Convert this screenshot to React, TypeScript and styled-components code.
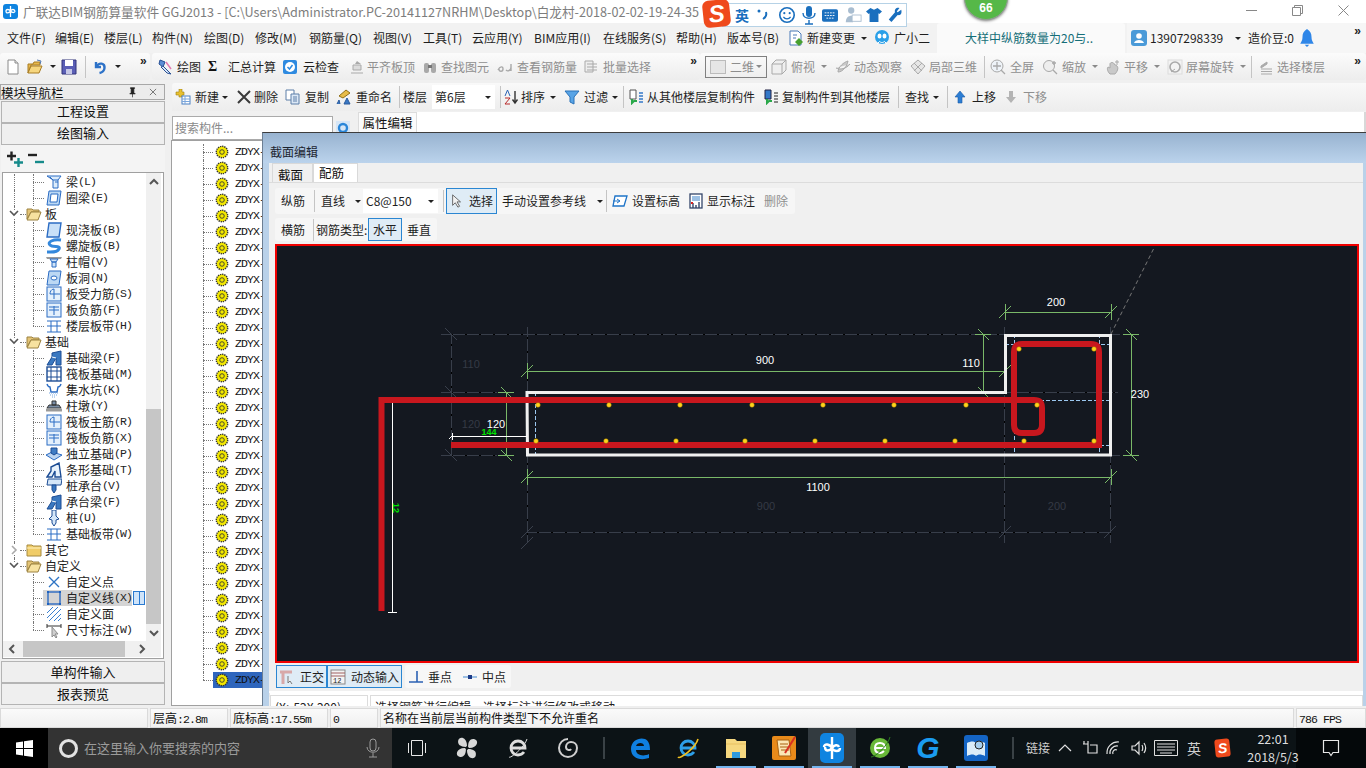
import React from 'react';
import styled, { createGlobalStyle } from 'styled-components';

const CJK = '"Noto Sans CJK SC","Noto Sans",sans-serif';
const MONO = '"Liberation Mono","Noto Sans CJK SC",monospace';

const Global = createGlobalStyle`
  html,body{margin:0;padding:0;overflow:hidden;background:#f0f0f0;}
  *{box-sizing:border-box;}
`;

const Root = styled.div`
  position:relative;width:1366px;height:768px;overflow:hidden;display:flex;flex-direction:column;
  font:12px/16px ${CJK};color:#1e1e1e;background:#f0f0f0;
`;
const TitleBar = styled.div`height:23px;background:#fff;display:flex;align-items:center;padding-left:3px;color:#7d7d7d;flex:none;`;
const TitleText = styled.div`margin-left:5px;font-size:12.65px;white-space:nowrap;width:700px;`;
const WinControls = styled.div`margin-left:auto;display:flex;width:138px;height:23px;`;
const WinBtn = styled.div`width:46px;display:flex;align-items:center;justify-content:center;padding-bottom:3px;`;

const MenuBar = styled.div`height:30px;flex:none;display:flex;background:#f2f2f2;padding-left:7px;align-items:center;`;
const MenuItem = styled.div<{ $w: number }>`width:${p => p.$w}px;flex:none;white-space:nowrap;display:flex;align-items:center;`;
const TipPanel = styled.div`width:188px;height:30px;flex:none;background:#fafafa;border-radius:3px 3px 0 0;color:#156e78;padding-left:28px;line-height:30px;margin-right:2px;`;
const UserPanel = styled.div`flex:1;height:30px;display:flex;align-items:center;background:#f6f6f6;padding-left:4px;position:relative;`;

const ToolRow = styled.div`height:30px;flex:none;display:flex;background:#f0f0f0;`;
const Group = styled.div<{ $w: number; $pad: number; $ml?: number }>`
  width:${p => p.$w}px;padding-left:${p => p.$pad}px;margin-left:${p => p.$ml ?? 0}px;height:27px;flex:none;display:flex;align-items:center;
  background:linear-gradient(#fbfbfb,#ededed);border-radius:3px;position:relative;
`;
const Slot = styled.div<{ $w: number; $dim?: boolean }>`
  width:${p => p.$w}px;flex:none;display:flex;align-items:center;white-space:nowrap;height:22px;
  color:${p => (p.$dim ? '#8f8f8f' : '#1e1e1e')};
`;
const IconBox = styled.span<{ $w: number }>`width:${p => p.$w}px;flex:none;display:flex;align-items:center;`;
const Caret = styled.span<{ $dim?: boolean }>`
  width:0;height:0;border:3px solid transparent;border-top:3px solid ${p => (p.$dim ? '#8a8a8a' : '#222')};border-bottom:0;display:block;flex:none;
`;
const Sep = styled.div<{ $w: number }>`width:${p => p.$w}px;flex:none;height:22px;display:flex;&::before{content:'';width:1px;height:22px;background:#c4c4c4;}`;
const More = styled.span`position:absolute;top:2px;font:bold 12px/12px "Liberation Sans",sans-serif;color:#222;`;
const MoreEnd = styled(More)`right:5px;`;
const MoreFirst = styled(More)`left:140px;`;
const MoreMid = styled(More)`right:3px;`;
const Combo = styled.div<{ $w: number; $white?: boolean; $box?: boolean }>`
  width:${p => p.$w}px;flex:none;height:${p => (p.$box ? 22 : 24)}px;display:flex;align-items:center;padding:0 4px 0 ${p => (p.$box ? 4 : 3)}px;
  background:${p => (p.$white ? '#fff' : 'transparent')};border:${p => (p.$box ? '1px solid #808080' : '0')};
  color:${p => (p.$box ? '#8d8d8d' : '#1e1e1e')};
  & > span:last-child{margin-left:auto;}
`;
const Sigma = styled.span`font:bold 14px/16px "Liberation Serif",serif;color:#111;`;

const Main = styled.div`flex:1;display:flex;min-height:0;`;
const Nav = styled.div`width:167px;flex:none;display:flex;flex-direction:column;padding-top:1px;`;
const NavHead = styled.div`height:16px;margin:0 2px 0 0;border:1px solid #a8a8a8;background:#ececec;display:flex;align-items:center;line-height:13px;font-size:12.5px;color:#111;padding-right:6px;white-space:nowrap;`;
const NavHeadTail = styled.div`margin-left:auto;display:flex;gap:10px;align-items:center;`;
const NavBtn = styled.div`height:22px;flex:none;margin:0 2px 0 1px;border:1px solid #b4b4b4;background:#efefef;text-align:center;font-size:13px;line-height:20px;color:#111;`;
const NavTopBtn = styled(NavBtn)`line-height:18px;`;
const NavStack = styled.div`display:flex;flex-direction:column;padding-top:1px;`;
const NavTools = styled.div`height:27px;flex:none;margin:0 2px 0 1px;display:flex;align-items:center;background:#f4f4f4;padding-left:6px;gap:5px;`;
const TreeBox = styled.div`flex:none;height:487px;margin:0 3px 2px 2px;border:1px solid #a0a0a0;background:#fff;display:flex;flex-direction:column;`;
const TreeBody = styled.div`flex:1;display:flex;min-height:0;`;
const TreeScroll = styled.div`width:143px;flex:none;overflow:hidden;padding-top:1px;`;
const VScroll = styled.div`width:15px;flex:none;margin-right:2px;background:#f0f0f0;display:flex;flex-direction:column;align-items:center;`;
const VTrack = styled.div`flex:1;width:15px;display:flex;flex-direction:column;justify-content:flex-end;`;
const VThumb = styled.div`width:15px;height:215px;background:#c6c6c6;`;
const ScrollArrow = styled.div`height:17px;width:15px;flex:none;display:flex;align-items:center;justify-content:center;`;
const HScroll = styled.div`height:16px;flex:none;margin:0 2px 1px 0;background:#f0f0f0;display:flex;align-items:center;`;
const HThumb = styled.div`width:102px;height:16px;background:#c6c6c6;margin:0 8px 0 3px;`;
const HEnd = styled.div`width:17px;height:16px;flex:none;display:flex;align-items:center;justify-content:center;`;

const TreeRow = styled.div<{ $child?: boolean; $guide?: boolean; $last?: boolean }>`
  position:relative;height:16px;display:flex;align-items:center;padding-left:${p => (p.$child ? 40 : 6)}px;white-space:nowrap;
  &::before{content:'';position:absolute;left:${p => (p.$child ? 30 : 17)}px;top:8px;width:${p => (p.$child ? 11 : 6)}px;border-top:1px dotted #777;}
  &::after{content:'';position:absolute;left:${p => (p.$child ? 30 : 11)}px;top:0;height:${p => (p.$guide ? (p.$last ? 8 : 16) : 0)}px;border-left:1px dotted #777;}
`;
const Rail = styled.span`position:absolute;left:11px;top:0;height:16px;border-left:1px dotted #777;`;
const TreeCell = styled.div<{ $sel?: boolean }>`display:flex;align-items:center;height:16px;padding-left:3px;gap:4px;background:${p => (p.$sel ? '#d4d4d4' : 'transparent')};position:relative;z-index:1;`;
const TreeLabel = styled.span`font-size:12px;line-height:16px;color:#222;display:flex;align-items:center;`;
const TreeKey = styled.span`font:11.5px/16px ${MONO};letter-spacing:-.9px;width:18px;`;
const Chevron = styled.span`width:10px;flex:none;display:flex;justify-content:center;background:#fff;position:relative;z-index:1;`;
const RootIcon = styled.span`width:16px;margin-left:7px;flex:none;display:flex;margin-right:3px;position:relative;z-index:1;background:#fff;`;
const ColumnMark = styled.span`flex:none;width:12px;height:14px;margin-left:1px;border:1px solid #2a7ad0;background:linear-gradient(90deg,#cfe4fa 45%,#2a7ad0 45%,#2a7ad0 55%,#cfe4fa 55%);`;

const Work = styled.div`flex:1;display:flex;flex-direction:column;min-width:0;padding-left:5px;`;
const Strip2 = styled.div`height:28px;flex:none;display:flex;align-items:center;background:linear-gradient(#f9f9f9,#ededed);border-radius:3px 0 0 0;padding-left:3px;`;
const Lower = styled.div`flex:1;display:flex;min-height:0;`;
const ListCol = styled.div`width:186px;flex:none;display:flex;flex-direction:column;`;
const SearchRow = styled.div`height:24px;margin-top:5px;flex:none;display:flex;align-items:center;gap:2px;`;
const SearchInput = styled.div`width:161px;height:24px;border:1px solid #aaa;background:#fff;color:#8a8a8a;padding-left:2px;line-height:22px;`;
const ListTree = styled.div`flex:1;margin-left:-1px;width:120px;border:1px solid #a0a0a0;background:#fff;padding-top:3px;overflow:hidden;`;
const ListRow = styled.div<{ $last?: boolean }>`
  position:relative;height:16px;display:flex;align-items:center;padding-left:41px;
  &::before{content:'';position:absolute;left:31px;top:0;height:${p => (p.$last ? 8 : 16)}px;border-left:1px dotted #777;}
  &::after{content:'';position:absolute;left:31px;top:8px;width:10px;border-top:1px dotted #777;}
`;
const ListCell = styled.div<{ $sel?: boolean }>`display:flex;align-items:center;gap:6px;height:16px;padding-left:2px;width:78px;background:${p => (p.$sel ? '#2f66bd' : 'transparent')};font:11.5px/16px ${MONO};letter-spacing:-.9px;color:#111;`;
const PropCol = styled.div`flex:1;margin-top:1px;background:#f0f0f0;display:flex;flex-direction:column;`;
const PropTabs = styled.div`height:20px;background:#fff;border-right:2px solid #d8d8d8;flex:none;display:flex;`;
const PropTab = styled.div`width:59px;text-align:center;line-height:20px;background:#fbfbfb;font-size:12.5px;color:#111;border:1px solid #dcdcdc;border-bottom:0;`;

const Status = styled.div`height:22px;flex:none;display:flex;padding-top:2px;background:#efefef;gap:2px;`;
const StatCell = styled.div<{ $w?: number }>`
  ${p => (p.$w ? `width:${p.$w}px;flex:none;` : 'flex:1;')}border:1px solid #dadada;background:linear-gradient(#fafafa,#f0f0f0);line-height:18px;padding-left:2px;white-space:nowrap;color:#111;
`;
const Mono = styled.span`font:11.5px/18px ${MONO};letter-spacing:-.9px;`;

const Taskbar = styled.div`height:40px;flex:none;display:flex;align-items:stretch;background:#0c1316;position:relative;`;
const Start = styled.div`width:48px;background:#000;display:flex;align-items:center;justify-content:center;`;
const SearchBox = styled.div`width:344px;background:#333;display:flex;align-items:center;color:#9b9b9b;font-size:13px;padding-left:11px;`;
const Cortana = styled.span`width:19px;height:19px;border-radius:50%;border:3px solid #e2e2e2;flex:none;margin-right:6px;`;
const Mic = styled.span`margin-left:auto;margin-right:12px;display:flex;`;
const TaskSlot = styled.div<{ $w: number; $on?: boolean; $bar?: boolean }>`
  width:${p => p.$w}px;flex:none;display:flex;align-items:center;justify-content:center;position:relative;
  background:${p => (p.$on ? '#333b40' : 'transparent')};
  ${p => (p.$bar ? `&::after{content:'';position:absolute;left:4px;right:4px;bottom:0;height:2px;background:#74b4ee;}` : '')}
`;
const TaskSep = styled.span`width:2px;height:22px;background:#3a4246;`;
const TrayText = styled.span`color:#d0d0d0;font-size:12px;`;
const TrayIme = styled(TrayText)`font-size:14px;`;
const Clock = styled.div`width:70px;flex:none;text-align:center;color:#dedede;line-height:18px;font-size:12.5px;padding-top:2px;white-space:nowrap;position:relative;z-index:1;`;
const NotifyZone = styled.div`flex:1;background:#04080a;display:flex;align-items:center;justify-content:center;margin-left:-12px;`;
const GLogo = styled.span`color:#1a9cf0;font:italic bold 30px/30px "Liberation Sans",sans-serif;`;
const SogouMini = styled.span`
  width:15px;height:18px;border-radius:3px;background:#ef4a1c;color:#fff;font:italic 900 14px/18px "Liberation Sans",sans-serif;text-align:center;transform:rotate(-6deg);display:block;
`;

const Dialog = styled.div`
  position:absolute;left:262px;top:132px;width:1104px;height:574px;border-top:1px solid #3d3d3d;border-left:1px solid #6d7f93;
  display:flex;flex-direction:column;background:#b9d1e9;
`;
const DlgTitle = styled.div`height:30px;flex:none;background:linear-gradient(#98b3d0,#bbd3ec);line-height:37px;padding-left:7px;color:#1c2430;`;
const DlgBody = styled.div`flex:1;margin:0 3px 0 6px;background:#f0f0f0;display:flex;flex-direction:column;min-height:0;`;
const DlgTabs = styled.div`height:20px;flex:none;display:flex;padding-left:3px;background:#f0f0f0;border-bottom:1px solid #dcdcdc;`;
const DlgTab = styled.div<{ $on?: boolean }>`
  width:${p => (p.$on ? 45 : 41)}px;padding-left:5px;line-height:${p => (p.$on ? 17 : 22)}px;font-size:12.5px;
  background:${p => (p.$on ? '#fff' : '#f0f0f0')};border:1px solid #d9d9d9;border-bottom:0;color:#111;
`;
const DlgBar = styled.div<{ $w: number; $h: number; $mt: number }>`
  width:${p => p.$w}px;height:${p => p.$h}px;margin:${p => p.$mt}px 0 0 6px;flex:none;display:flex;align-items:center;background:#f6f6f6;border-radius:3px;padding-left:6px;
`;
const Toggled = styled.div<{ $w: number }>`
  width:${p => p.$w}px;flex:none;height:100%;border:1px solid #2a86d2;background:#dfecf6;display:flex;align-items:center;justify-content:center;gap:5px;white-space:nowrap;
`;
const CanvasFrame = styled.div`width:1084px;height:419px;margin:3px 0 0 6px;flex:none;border:2px solid #f00000;background:#141820;`;
const CanvasSvg = styled.svg`display:block;font-family:"Liberation Sans",sans-serif;`;
const FootRow = styled.div`height:23px;margin:2px 0 0 7px;flex:none;display:flex;`;
const FootGroup = styled.div`height:23px;margin-left:3px;padding:0 5px 0 3px;background:#f7f7f7;display:flex;align-items:center;gap:4px;border-radius:3px;`;
const DlgRule = styled.div`height:2px;margin-top:3px;background:#fff;flex:none;`;
const DlgTail = styled.div`flex:1;background:#e9e9e9;`;
const TailRow = styled.div`height:13px;flex:none;background:#fff;display:flex;gap:2px;margin:-4px 0 0 1px;overflow:hidden;padding-top:2px;`;
const TailCell = styled.div<{ $w?: number }>`
  ${p => (p.$w ? `width:${p.$w}px;flex:none;` : 'flex:1;')}height:20px;border:1px solid #dcdcdc;padding:3px 0 0 4px;line-height:16px;white-space:nowrap;color:#222;
`;

const Ime = styled.div`
  position:absolute;left:722px;top:3px;width:185px;height:24px;background:#fff;border:1px solid #b6d2e6;display:flex;align-items:center;padding-left:12px;
`;
const ImeLetter = styled.span`color:#1a6fbe;font-weight:700;font-size:14px;margin-right:7px;`;
const ImeIcon = styled.svg<{ $ml: number }>`margin-left:${p => p.$ml}px;display:block;flex:none;`;
const SogouS = styled.div`
  position:absolute;left:703px;top:0;width:27px;height:27px;border-radius:6px;background:#ef4a1c;transform:rotate(-6deg);color:#fff;
  font:italic 900 24px/27px "Liberation Sans",sans-serif;text-align:center;
`;
const Bubble = styled.div`
  position:absolute;left:964px;top:-24px;width:44px;height:44px;border-radius:50%;background:#56b848;border:1px solid #8fa08f;box-shadow:0 1px 3px #777;
  color:#fff;font:bold 12px/14px "Liberation Sans",sans-serif;text-align:center;padding-top:24px;
`;

/* ---- icons ---- */
const B = '#2b6cc4', LB = '#bcd8f4', GY = '#a9a9a9', LG = '#dcdcdc';
const G: Record<string, React.ReactNode> = {
  doc: <><path d="M3 1h7l3 3v11H3z" fill="#fff" stroke="#8a8a8a" /><path d="M10 1v3h3" fill="#e8e8e8" stroke="#8a8a8a" /></>,
  open: <><path d="M1 5h5l1-2h6v3H4L1 14z" fill="#e8b84a" stroke="#a87c24" /><path d="M4 7h11l-3 7H1z" fill="#f6d67e" stroke="#a87c24" /><path d="M10 1l4 1-1 3" fill="none" stroke="#4f78b4" /></>,
  save: <><path d="M1 1h14v14H1z" fill="#5b5fb6" stroke="#33357a" /><path d="M4 1h8v6H4z" fill="#fff" /><path d="M5 10h6v5H5z" fill="#c6c8e6" /></>,
  undo: <path d="M4 3v5h5M4.5 7.5C7 3 13 4 12.5 9 12.2 12 10 13.5 7.5 14" fill="none" stroke="#2d72c8" strokeWidth="2.4" />,
  draw: <><path d="M3 1l5 2-2 5-4-3z" fill="#5c8ed6" stroke="#274f94" /><path d="M6 7l6 6 2 2-4-1-6-6z" fill="#d8e6f8" stroke="#274f94" /><path d="M9 3l5 7" stroke="#e07ab0" strokeWidth="1.5" /></>,
  cloud: <><rect x="1" y="1" width="14" height="14" rx="2" fill="#2e8ae0" /><circle cx="8" cy="8" r="5" fill="#fff" /><path d="M5.5 8l2 2 3-4" fill="none" stroke="#2e8ae0" strokeWidth="1.5" /></>,
  align: <><path d="M2 14h12M4 11h8V6H4z" fill={LG} stroke={GY} /><path d="M8 2l4 3H6z" fill={GY} /></>,
  find: <><rect x="2" y="4" width="5" height="10" rx="2" fill={GY} /><rect x="9" y="4" width="5" height="10" rx="2" fill={GY} /><rect x="6" y="6" width="4" height="3" fill="#777" /></>,
  rebar: <path d="M1 11c2-4 5-4 5-1s-4 3-4 0M9 11c2 2 5 0 5-3M14 5v7" fill="none" stroke={GY} strokeWidth="1.4" />,
  batch: <><path d="M2 2h8v11H2z" fill="#eee" stroke={GY} /><path d="M4 5h10M4 8h10M4 11h10" stroke={GY} /></>,
  box: <><path d="M1 5l4-4h10v10l-4 4H1z" fill="#efefef" stroke={GY} /><path d="M1 5h10v10M11 5l4-4" fill="none" stroke={GY} /></>,
  orbit: <path d="M3 13c0-5 6-10 10-11-1 5-5 11-10 11z M1 9c4 2 10 1 14-4" fill="#c9c9c9" stroke={GY} />,
  local: <path d="M8 1l7 6-7 8-7-8z M4 4l8 8M12 4l-8 8" fill="#e6e6e6" stroke={GY} />,
  full: <><circle cx="7" cy="7" r="6" fill="#eef3f8" stroke={GY} /><path d="M7 3v8M3 7h8M11 11l4 4" stroke={GY} strokeWidth="1.3" /></>,
  zoom: <><circle cx="7" cy="7" r="5.5" fill="#eee" stroke={GY} /><path d="M11 11l4 4M12 2v4M10 4h4" stroke={GY} strokeWidth="1.3" /></>,
  pan: <path d="M5 15c-3-3-3-6-2-7l2 1V5c0-2 4-2 4 0l3 2c2 2 0 6-2 8zM12 1v5M10 3h4" fill="#c9c9c9" stroke={GY} />,
  rotate: <><rect x="1" y="1" width="14" height="14" fill="#f3f3f3" stroke={LG} /><circle cx="8" cy="8" r="5" fill="none" stroke={GY} strokeWidth="1.6" /><path d="M4 13l4-3" stroke={GY} /></>,
  layers: <path d="M3 7l6-4v2L3 9zM3 10h11M3 12.5h11M3 15h11" fill={GY} stroke={GY} />,
  newp: <><path d="M1 3h3V0h3v3h2v3H7v2H4V6H1z" fill="#e8c030" stroke="#a08010" strokeWidth=".6" /><rect x="7" y="7" width="8" height="8" fill="#fff" stroke="#4a80c4" /><path d="M7 10h8M7 12.5h8M10 7v8" stroke="#7aa6dc" /></>,
  del: <path d="M2 2l12 12M14 2L2 14" stroke="#3a3a3a" strokeWidth="2" />,
  copy: <><path d="M1 1h8v10H1z" fill="#fff" stroke="#5c7ea8" /><path d="M6 5h8v10H6z" fill="#dce8f6" stroke="#5c7ea8" /><path d="M8 8h4M8 10h4M8 12h4" stroke="#5c7ea8" /></>,
  rename: <><path d="M3 7l7-6 4 3-7 5z" fill="#e8bc48" stroke="#907018" /><path d="M1 15l2-4 1 4M8 15h6l-3-6z" fill="#3a78c4" stroke="#2a5a9c" /></>,
  sort: <><path d="M12 2v11M9.5 10.5L12 14l2.5-3.5" fill="none" stroke="#333" strokeWidth="1.4" /><path d="M2 7l2.5-6L7 7" fill="none" stroke="#2a62b4" /><path d="M2 9h5l-5 6h5" fill="none" stroke="#b82828" /></>,
  filter: <path d="M1 2h14L10 8v7l-4-2V8z" fill="#58a4e6" stroke="#2a72b8" />,
  cfrom: <><path d="M2 1h6v9H2z" fill="#fff" stroke="#555" /><path d="M4 10v4l2-2 3 0" stroke="#2aa84a" strokeWidth="2" fill="none" /><path d="M11 4h4M11 7h4M11 10h4M11 13h4" stroke="#3478c8" strokeWidth="1.6" /></>,
  cto: <><path d="M2 1h6v9H2z" fill="#3478c8" stroke="#224" /><path d="M4 10v4l2-2 3 0" stroke="#2aa84a" strokeWidth="2" fill="none" /><path d="M11 4h4M11 7h4M11 10h4M11 13h4" stroke="#666" strokeWidth="1.6" /></>,
  up: <path d="M8 2l5 6h-3v6H6V8H3z" fill="#2c7ed4" stroke="#1c5ca4" strokeWidth=".6" />,
  down: <path d="M8 14l5-6h-3V2H6v6H3z" fill="#b4b4b4" />,
  cursor: <path d="M3 1v12l3-3 3 5 2-1-3-5h4z" fill="#f2f2f2" stroke="#5a5a5a" />,
  level: <><path d="M3 3h12l-3 10H1z" fill="#fff" stroke="#1e74c8" strokeWidth="1.3" /><path d="M1 8h7M5 6l3 2-3 2" stroke="#1e74c8" fill="none" /></>,
  mark: <><rect x="2" y="1" width="12" height="14" fill="#fff" stroke="#33456a" strokeWidth="1.3" /><rect x="4" y="3" width="8" height="5" fill="#9cc0e4" /><path d="M5 15v-5M8 15v-3M11 15v-6" stroke="#33456a" strokeWidth="1.4" /><path d="M3 10h2" stroke="#d82020" strokeWidth="2" /></>,
  ortho: <><path d="M1 3h12M4 3v12" stroke="#d8a8a8" strokeWidth="3" /><path d="M9 7v7l2-2 2 3" fill="#eee" stroke="#777" /></>,
  dyn: <><rect x="1" y="1" width="14" height="14" fill="#f4f4f4" stroke="#888" /><path d="M1 4h14M1 7h14" stroke="#a06060" /><text x="3" y="14" fontSize="7" fill="#222" fontFamily="Liberation Mono">12</text></>,
  perp: <path d="M1 13h14M9 2v11" stroke="#2c62b4" strokeWidth="1.6" />,
  mid: <><path d="M1 8h14" stroke="#9cc0e4" strokeWidth="2" /><rect x="6" y="6" width="4" height="4" fill="#1e3c88" /></>,
  gear: <><circle cx="8" cy="8" r="6.5" fill="#f3e800" stroke="#333" strokeDasharray="1.5 1" strokeWidth="1.6" /><circle cx="8" cy="8" r="2.6" fill="#f3e800" stroke="#333" /></>,
  new2: <><path d="M2 1h8l3 3v11H2z" fill="#fff" stroke="#4a7ab8" /><path d="M5 5h4M5 8h3" stroke="#4a7ab8" /><path d="M11 8l4 4-4 4-4-4z" fill="#48a030" /></>,
  bot: <><circle cx="8" cy="7" r="7" fill="#2aa0e8" /><ellipse cx="5.5" cy="6" rx="2" ry="2.6" fill="#fff" /><ellipse cx="10.5" cy="6" rx="2" ry="2.6" fill="#fff" /><path d="M5 11c2 2 4 2 6 0M3 14l2-2M13 14l-2-2" stroke="#fff" fill="none" /></>,
  user: <><rect x="0" y="0" width="16" height="16" rx="3" fill="#4a9ad8" /><circle cx="8" cy="6" r="2.8" fill="#fff" /><path d="M3 13c1-4 9-4 10 0z" fill="#fff" /></>,
  bell: <path d="M8 0c-3 2-4 4-4 7 0 3-1 4-2 6h12c-1-2-2-3-2-6 0-3-1-5-4-7zM6 14h4l-2 2z" fill="#2f86e8" />,
  pin: <path d="M5 1h6v1l-1 1v5l2 2H4l2-2V3L5 2zM8 10v5" fill="#222" stroke="#222" />,
  x: <path d="M3 3l10 10M13 3L3 13" stroke="#333" />,
  plus: <><path d="M0 5h9M4.5 .5v9" stroke="#222" strokeWidth="2.4" /><path d="M7 11.5h9M11.5 7v9" stroke="#168a8a" strokeWidth="2.4" /></>,
  minus: <><path d="M0 4h9" stroke="#222" strokeWidth="2.4" /><path d="M7 11h9" stroke="#168a8a" strokeWidth="2.4" /></>,
  lens: <><rect x="1" y="1" width="14" height="14" fill="#d6e6f6" /><circle cx="8" cy="8" r="4" fill="none" stroke="#2a86d8" strokeWidth="2.4" /></>,
  folderO: <><path d="M1 13V3h5l1 1h6v2H5z" fill="#e4c476" stroke="#9c8240" /><path d="M5 6h10l-3 8H1z" fill="#f7e2a0" stroke="#9c8240" /></>,
  folderC: <><path d="M1 3h5l1 1h8v10H1z" fill="#f0cc68" stroke="#a68a40" /><path d="M1 6h14" stroke="#fff2c0" /></>,
  beam: <path d="M1 2h14l-3 4v8H7V6zM7 6h5M4 3l3 3M9 8h3" fill="#dcecfb" stroke={B} />,
  ring: <><path d="M3 1h12l-2 14H1z" fill={LB} stroke={B} /><path d="M5 4h7l-1 8H4z" fill="#fff" stroke={B} /></>,
  slab: <path d="M3 1h12l-2 14H1z" fill="#c8e0f8" stroke={B} strokeWidth="1.4" />,
  spiral: <path d="M15 2C7 1 1 4 4 7s11 0 9 4-8 3-12 3" fill="none" stroke="#3488dc" strokeWidth="3" />,
  cap: <><path d="M0 3h16l-1 2H1z" fill="#9a9a9a" /><path d="M4 5h8l-2 3H6zM6 8h4v5H6z" fill="#d0e4f8" stroke={B} /></>,
  hole: <><path d="M3 1h12l-2 14H1z" fill={LB} stroke={B} /><ellipse cx="8" cy="8" rx="3" ry="2" fill="#fff" stroke={B} /></>,
  bars: <><rect x="1" y="1" width="14" height="14" fill="#e4f0fc" stroke={B} /><path d="M8 3c-3 0-4 3-4 5h10M8 3v10" fill="none" stroke={B} /></>,
  barsn: <><rect x="1" y="1" width="14" height="14" fill="#e4f0fc" stroke={B} /><path d="M3 8h10M8 4v9M3 5h10" fill="none" stroke={B} /></>,
  band: <path d="M1 3h14M1 14h14M5 3v11M11 3v11M1 8h14" fill="none" stroke={B} />,
  fbeam: <><path d="M1 15l5-8V3l9-2v14h-5V8l-4 7z" fill="#3a78c0" stroke="#1c4c94" /><path d="M6 7l4 1" stroke="#fff" /></>,
  raft: <><rect x="1" y="1" width="14" height="14" fill="#fff" stroke="#1c4c94" strokeWidth="1.4" /><path d="M1 5h14M1 11h14M5 1v14M11 1v14" stroke="#1c4c94" /></>,
  pit: <><path d="M1 2c1 3 2 3 3 3l1 5h6l1-5c1 0 2 0 3-3" fill="none" stroke={B} strokeWidth="1.4" /><path d="M3 11h10M4 13h8M6 15h4" stroke="#7aa8e0" strokeDasharray="1 1" /></>,
  pier: <><path d="M6 3h4v4H6zM3 7h10l2 3H1z" fill="#7b8fa8" stroke="#333" /><path d="M0 12h16" stroke="#9a9a9a" strokeWidth="3" /></>,
  iso: <><path d="M0 9l6-3 10 3-8 5z" fill="#bcd4f0" stroke={B} /><path d="M5 7V2h6v5l-3 2z" fill="#3f7cc4" stroke="#1c4c94" /></>,
  strip: <path d="M1 15l4-6V5l8-4 2 14H9V9l-3 6z" fill="#e8f2fc" stroke="#1c4c94" strokeWidth="1.4" />,
  pcap: <><path d="M2 1h14l-1 6H1z" fill="#d4e6f8" stroke="#1c4c94" /><path d="M6 7h4v5l-2 3-2-3z" fill="#3a78c0" stroke="#1c4c94" /></>,
  pile: <><path d="M6 0h4v6l3 3-3 1v3l-2 3-2-3v-3L3 9l3-3z" fill="#d4e6f8" stroke="#1c4c94" /></>,
  point: <path d="M3 3l10 10M13 3L3 13" stroke="#2e74c4" strokeWidth="1.4" />,
  line: <><rect x="2" y="2" width="12" height="12" fill="none" stroke="#1e62c0" strokeWidth="1.3" /><path d="M1 1h2v2H1zM13 1h2v2h-2zM1 13h2v2H1zM13 13h2v2h-2z" fill="#1e62c0" /></>,
  area: <path d="M1 7l6-6M1 12L12 1M3 15L15 3M8 15l7-7M12 15l3-3" stroke="#3a80d0" />,
  dim: <><path d="M1 2v4M15 2v4M1 4h14" stroke="#333" /><path d="M6 5v10l2-2 2 3 1-1-2-3h3z" fill="#cfcfcf" stroke="#8c8c8c" /></>,
};
const IconSvg = styled.svg`display:block;flex:none;`;
const Icon = ({ n, s = 16 }: { n: string; s?: number }) => (
  <IconSvg width={s} height={s} viewBox="0 0 16 16">{G[n]}</IconSvg>
);

type It = { x: number; i?: string; t?: string; tx?: number; dim?: boolean; k?: 'sep' | 'caret' | 'sigma' | 'blank' };
const Run = ({ items, end }: { items: It[]; end: number }) => (
  <>
    {items.map((it, idx) => {
      const w = (items[idx + 1] ? items[idx + 1].x : end) - it.x;
      if (it.k === 'sep') return <Sep key={idx} $w={w} />;
      if (it.k === 'caret') return <Slot key={idx} $w={w}><Caret $dim={it.dim} /></Slot>;
      if (it.k === 'sigma') return <Slot key={idx} $w={w}><Sigma>Σ</Sigma></Slot>;
      return (
        <Slot key={idx} $w={w} $dim={it.dim}>
          {it.i && <IconBox $w={(it.tx ?? it.x + 16) - it.x}><Icon n={it.i} /></IconBox>}
          {it.t}
        </Slot>
      );
    })}
  </>
);

const tools1a: It[] = [
  { x: 5, i: 'doc', tx: 24 }, { x: 27, i: 'open' }, { x: 50, k: 'caret' }, { x: 61, i: 'save' }, { x: 85, k: 'sep' },
  { x: 92, i: 'undo' }, { x: 115, k: 'caret' },
];
const tools1b: It[] = [
  { x: 157, i: 'draw', t: '绘图', tx: 177 }, { x: 208, k: 'sigma' }, { x: 228, t: '汇总计算' },
  { x: 282, i: 'cloud', t: '云检查', tx: 303 }, { x: 349, i: 'align', t: '平齐板顶', tx: 367, dim: true },
  { x: 422, i: 'find', t: '查找图元', tx: 441, dim: true }, { x: 497, i: 'rebar', t: '查看钢筋量', tx: 517, dim: true },
  { x: 583, i: 'batch', t: '批量选择', tx: 603, dim: true },
];
const tools1c: It[] = [
  { x: 771, i: 'box', t: '俯视', tx: 791, dim: true }, { x: 821, k: 'caret', dim: true },
  { x: 835, i: 'orbit', t: '动态观察', tx: 854, dim: true }, { x: 910, i: 'local', t: '局部三维', tx: 929, dim: true },
  { x: 984, k: 'sep' }, { x: 990, i: 'full', t: '全屏', tx: 1010, dim: true }, { x: 1042, i: 'zoom', t: '缩放', tx: 1062, dim: true },
  { x: 1092, k: 'caret', dim: true }, { x: 1105, i: 'pan', t: '平移', tx: 1124, dim: true }, { x: 1154, k: 'caret', dim: true },
  { x: 1167, i: 'rotate', t: '屏幕旋转', tx: 1186, dim: true }, { x: 1240, k: 'caret', dim: true }, { x: 1251, k: 'sep' },
  { x: 1258, i: 'layers', t: '选择楼层', tx: 1277, dim: true },
];
const tools2a: It[] = [
  { x: 175, i: 'newp', t: '新建', tx: 195 }, { x: 222, k: 'caret' }, { x: 236, i: 'del', t: '删除', tx: 254 },
  { x: 285, i: 'copy', t: '复制', tx: 305 }, { x: 336, i: 'rename', t: '重命名', tx: 356 }, { x: 399, k: 'sep' }, { x: 403, t: '楼层' },
];
const tools2b: It[] = [
  { x: 500, k: 'sep' }, { x: 503, i: 'sort', t: '排序', tx: 521 }, { x: 550, k: 'caret' }, { x: 564, i: 'filter', t: '过滤', tx: 584 },
  { x: 612, k: 'caret' }, { x: 623, k: 'sep' }, { x: 628, i: 'cfrom', t: '从其他楼层复制构件', tx: 647 },
  { x: 763, i: 'cto', t: '复制构件到其他楼层', tx: 782 }, { x: 898, k: 'sep' }, { x: 905, t: '查找' }, { x: 933, k: 'caret' },
  { x: 947, k: 'sep' }, { x: 952, i: 'up', t: '上移', tx: 972 }, { x: 1003, i: 'down', dim: true, t: '下移', tx: 1023 },
];
const menu: [string, number][] = [
  ['文件(F)', 48], ['编辑(E)', 49], ['楼层(L)', 48], ['构件(N)', 52], ['绘图(D)', 51], ['修改(M)', 54], ['钢筋量(Q)', 64], ['视图(V)', 50],
  ['工具(T)', 49], ['云应用(Y)', 62], ['BIM应用(I)', 69], ['在线服务(S)', 73], ['帮助(H)', 51], ['版本号(B)', 61],
];

type Node = { n: string; k?: string; i: string; root?: boolean; closed?: boolean };
const nodes: Node[] = [
  { n: '梁', k: '(L)', i: 'beam' }, { n: '圈梁', k: '(E)', i: 'ring' }, { n: '板', i: 'folderO', root: true },
  { n: '现浇板', k: '(B)', i: 'slab' }, { n: '螺旋板', k: '(B)', i: 'spiral' }, { n: '柱帽', k: '(V)', i: 'cap' }, { n: '板洞', k: '(N)', i: 'hole' },
  { n: '板受力筋', k: '(S)', i: 'bars' }, { n: '板负筋', k: '(F)', i: 'barsn' }, { n: '楼层板带', k: '(H)', i: 'band' },
  { n: '基础', i: 'folderO', root: true }, { n: '基础梁', k: '(F)', i: 'fbeam' }, { n: '筏板基础', k: '(M)', i: 'raft' }, { n: '集水坑', k: '(K)', i: 'pit' },
  { n: '柱墩', k: '(Y)', i: 'pier' }, { n: '筏板主筋', k: '(R)', i: 'bars' }, { n: '筏板负筋', k: '(X)', i: 'barsn' }, { n: '独立基础', k: '(P)', i: 'iso' },
  { n: '条形基础', k: '(T)', i: 'strip' }, { n: '桩承台', k: '(V)', i: 'pcap' }, { n: '承台梁', k: '(F)', i: 'fbeam' }, { n: '桩', k: '(U)', i: 'pile' },
  { n: '基础板带', k: '(W)', i: 'band' }, { n: '其它', i: 'folderC', root: true, closed: true }, { n: '自定义', i: 'folderO', root: true },
  { n: '自定义点', i: 'point' }, { n: '自定义线', k: '(X)', i: 'line' }, { n: '自定义面', i: 'area' }, { n: '尺寸标注', k: '(W)', i: 'dim' },
];

const ChevDown = () => <svg width="10" height="8" viewBox="0 0 10 8"><path d="M1 1l4 4 4-4" fill="none" stroke="#555" strokeWidth="1.6" /></svg>;
const ChevRight = () => <svg width="8" height="10" viewBox="0 0 8 10"><path d="M2 1l4 4-4 4" fill="none" stroke="#aaa" strokeWidth="1.6" /></svg>;
const ArrowHead = ({ d }: { d: string }) => <svg width="10" height="10" viewBox="0 0 10 10"><path d={d} fill="none" stroke="#555" strokeWidth="2" /></svg>;

/* ---- drawing ---- */
const GR = '#79b868';
const DK = '#383e4a';
const HDim = ({ a, b, y, c = GR }: { a: number; b: number; y: number; c?: string }) => (
  <g stroke={c} fill="none">
    <path d={`M${a} ${y + .5}H${b}M${a + .5} ${y - 8}v16M${b + .5} ${y - 8}v16`} shapeRendering="crispEdges" />
    <path d={`M${a - 6} ${y + 6}l12 -12M${b - 6} ${y + 6}l12 -12`} />
  </g>
);
const VDim = ({ a, b, x, c = GR }: { a: number; b: number; x: number; c?: string }) => (
  <g stroke={c} fill="none">
    <path d={`M${x + .5} ${a}V${b}M${x - 8} ${a + .5}h16M${x - 8} ${b + .5}h16`} shapeRendering="crispEdges" />
    <path d={`M${x - 5} ${a - 5}l11 11M${x - 5} ${b - 5}l11 11`} />
  </g>
);
const Dash = ({ d, c = DK }: { d: string; c?: string }) => (
  <g fill="none" shapeRendering="crispEdges">
    <path d={d} stroke={c} />
    <path d={d} stroke="#000" strokeDasharray="2 12" strokeDashoffset="-10" />
  </g>
);
const Blue = ({ d }: { d: string }) => <path d={d} fill="none" stroke="#9cc8f0" strokeDasharray="4 2" shapeRendering="crispEdges" />;
const dotsA = [538, 609, 680, 752, 823, 894, 966, 1037];
const dotsB = [536, 606, 676, 745, 815, 885, 955, 1024, 1094];
const Dot = ({ x, y }: { x: number; y: number }) => <circle cx={x} cy={y} r="2.3" fill="#ffd21e" stroke="#a88400" strokeWidth=".5" />;
const Label = ({ x, y, t, c = '#fff' }: { x: number; y: number; t: string; c?: string }) => (
  <text x={x} y={y} fill={c} fontSize="11" textAnchor="middle">{t}</text>
);
const Drawing = () => (
  <CanvasSvg width="1080" height="415" viewBox="277 246 1080 415">
    <Dash d="M441 334.5H1005M451.5 334V455M441 392.5H497M441 455.5H497M527.5 327V543M527 532.5H1111M1004.5 327V543M1110.5 327V543M1005 392.5H1118M1111 334.5H1120M1111 455.5H1120" />
    <path d="M1111 334L1154 248" stroke="#777" strokeDasharray="4 3" fill="none" />
    <g stroke="#3a404c" fill="none">
      <path d="M445 328l12 12M445 386l12 12M445 449l12 12M521 538l12 -12M521 549l12 -12M999 538l12 -12M1104 538l12 -12" />
    </g>
    <Label x={471} y={368} t="110" c="#353a45" /><Label x={471} y={428} t="120" c="#353a45" />
    <Label x={766} y={510} t="900" c="#353a45" /><Label x={1057} y={510} t="200" c="#353a45" />
    <Blue d="M535.5 392V455M1014.5 334V455M1099.5 334V455M1005 344.5H1111M1040 400.5H1111M1100 445.5H1111" />
    <HDim a={527} b={1005} y={371} /><HDim a={1005} b={1111} y={312} /><HDim a={527} b={1111} y={477} />
    <VDim a={334} b={392} x={983} /><VDim a={334} b={455} x={1131} /><VDim a={392} b={455} x={506} />
    <path d="M527 392.5H1005.5V335.5H1110.5V455H527.5Z" fill="none" stroke="#f0f0f0" strokeWidth="3" />
    <path d="M451 436.5H527M392.5 400V612M388 401h9M388 612h9M449 439l4 -4M452 433v7" stroke="#fff" fill="none" shapeRendering="crispEdges" />
    <path d="M381.5 611V400H1034q8 0 8 8V425q0 8 -8 8H1022q-8 0 -8 -8V352q0 -8 8 -8H1091q8 0 8 8V445H451" fill="none" stroke="#c8171e" strokeWidth="6" strokeLinejoin="miter" />
    {dotsA.map(x => <Dot key={x} x={x} y={405} />)}
    {dotsB.map(x => <Dot key={x} x={x} y={441} />)}
    <Dot x={1019} y={349} /><Dot x={1094} y={349} />
    <Label x={765} y={364} t="900" /><Label x={1056} y={306} t="200" /><Label x={971} y={367} t="110" />
    <Label x={1140} y={398} t="230" /><Label x={496} y={428} t="120" /><Label x={818} y={491} t="1100" />
    <text x={489} y={435} fill="#00e000" fontSize="9" fontWeight="bold" textAnchor="middle">144</text>
    <text x={393} y={503} fill="#00e000" fontSize="9" fontWeight="bold" transform="rotate(90 393 503)">12</text>
  </CanvasSvg>
);

const Win = () => (
  <svg width="17" height="17" viewBox="0 0 17 17"><path d="M0 2.5l7-1v6.5H0zM8 1.3L17 0v8H8zM0 9h7v6.5l-7-1zM8 9h9v8l-9-1.3z" fill="#fff" /></svg>
);
const Fan = () => (
  <svg width="24" height="24" viewBox="0 0 22 22"><path d="M10 10C5 10 2 8 3 4s8-3 8 5zM12 10c0-5 2-8 6-7s3 8-5 8zM12 12c5 0 8 2 7 6s-8 3-8-5zM10 12c0 5-2 8-6 7s-3-8 5-8z" fill="#d8d8d8" /></svg>
);
const EShape = ({ c, sw = 2.8 }: { c: string; sw?: number }) => (
  <path d="M6 12h13c0-4-3-7-7-7s-7 3-7 7 3 7 7 7c2.5 0 4.5-1 6-3" fill="none" stroke={c} strokeWidth={sw} />
);
const IeOutline = () => (
  <svg width="24" height="24" viewBox="0 0 24 24"><EShape c="#ddd" /><path d="M3 21C4 23 18 12 21 3" fill="none" stroke="#ddd" /></svg>
);
const Swirl = () => (
  <svg width="22" height="22" viewBox="0 0 22 22"><path d="M11 2a9 9 0 1 0 9 9c0-4-3-6-6-6a5 5 0 0 0-5 5c0 3 4 4 5 2" fill="none" stroke="#cfcfcf" strokeWidth="2" /></svg>
);
const EdgeIcon = () => (
  <svg width="24" height="24" viewBox="0 0 24 24"><path d="M22 14H8c0 5 7 7 13 4v4c-9 3-18 0-18-9C3 4 12 1 17 3c4 2 5 6 5 11zM8 10h8c0-4-7-4-8 0z" fill="#0f7fe0" /></svg>
);
const IeColor = () => (
  <svg width="24" height="24" viewBox="0 0 24 24"><EShape c="#2d9fe8" /><path d="M2 21C4 24 20 11 22 3" fill="none" stroke="#f0c020" strokeWidth="1.6" /></svg>
);
const FolderT = () => (
  <svg width="24" height="24" viewBox="0 0 24 24"><path d="M2 3h9l2 2h9v17H2z" fill="#f6d880" /><path d="M2 8h20" stroke="#e8c060" /><path d="M8 22v-6h8v6" fill="#2e9ae0" /></svg>
);
const Notes = () => (
  <svg width="26" height="26" viewBox="0 0 26 26"><rect x="1" y="1" width="24" height="24" rx="2" fill="#e88a1a" /><path d="M6 5h12l2 16H8z" fill="#fbe6b4" stroke="#a86010" /><path d="M9 9h8M9 12h8M10 15h8" stroke="#a86010" /><path d="M24 2L14 18" stroke="#d83020" strokeWidth="2" /></svg>
);
const Glodon = () => (
  <svg width="24" height="30" viewBox="0 0 24 30"><rect width="24" height="30" rx="5" fill="#0f84e0" /><path d="M12 4v22M4 14c0-4 6-3 8 1s8 4 8 0M5 14c0 5 5 4 7 1s6-4 7-1" fill="none" stroke="#fff" strokeWidth="2.4" /></svg>
);
const GreenE = () => (
  <svg width="24" height="26" viewBox="0 0 24 26"><circle cx="12" cy="13" r="10" fill="#68b838" /><path d="M7 13h10c0-3-2-5-5-5s-5 2-5 5 2 5 5 5c2 0 3-1 4-2" fill="none" stroke="#fff" strokeWidth="2" /><path d="M3 22C8 22 20 10 22 2" stroke="#2a7a20" fill="none" /></svg>
);
const Book = () => (
  <svg width="24" height="26" viewBox="0 0 24 26"><rect width="24" height="26" rx="3" fill="#1464c4" /><path d="M3 8c4-2 7-2 9 0 2-2 5-2 9 0v13c-4-2-7-2-9 0-2-2-5-2-9 0z" fill="#dcecf8" /><circle cx="15" cy="10" r="4" fill="#a8d0f0" stroke="#222" /></svg>
);
const Tray = ({ d }: { d: string }) => (
  <svg width="18" height="16" viewBox="0 0 18 16"><path d={d} fill="none" stroke="#e0e0e0" strokeWidth="1.2" /></svg>
);

const App = () => (
  <Root>
    <Global />
    <TitleBar>
      <svg width="15" height="15" viewBox="0 0 15 15"><rect width="15" height="15" rx="3" fill="#0f84e0" /><path d="M7.5 2v11M3 7c0-2 3-2 4.5 0S12 9 12 7M3 7c0 3 3 2 4.5 0S11 5 12 7" fill="none" stroke="#fff" strokeWidth="1.3" /></svg>
      <TitleText>广联达BIM钢筋算量软件 GGJ2013 - [C:\Users\Administrator.PC-20141127NRHM\Desktop\白龙村-2018-02-02-19-24-35</TitleText>
      <WinControls>
        <WinBtn><svg width="11" height="11"><path d="M0 5.5h11" stroke="#888" /></svg></WinBtn>
        <WinBtn><svg width="11" height="11"><path d="M2.5 2.5V.5h8v8h-2M.5 2.5h8v8h-8z" fill="none" stroke="#888" /></svg></WinBtn>
        <WinBtn><svg width="11" height="11"><path d="M.5.5l10 10M10.5.5l-10 10" stroke="#888" /></svg></WinBtn>
      </WinControls>
    </TitleBar>

    <MenuBar>
      {menu.map(([t, w]) => <MenuItem key={t} $w={w}>{t}</MenuItem>)}
      <MenuItem $w={19}><Icon n="new2" /></MenuItem>
      <MenuItem $w={54}>新建变更</MenuItem>
      <MenuItem $w={13}><Caret /></MenuItem>
      <MenuItem $w={20}><Icon n="bot" /></MenuItem>
      <MenuItem $w={43}>广小二</MenuItem>
      <TipPanel>大样中纵筋数量为20与..</TipPanel>
      <UserPanel>
        <IconBox $w={19}><Icon n="user" /></IconBox>
        <MenuItem $w={85}>13907298339</MenuItem>
        <MenuItem $w={13}><Caret /></MenuItem>
        <MenuItem $w={50}>造价豆:0</MenuItem>
        <Icon n="bell" s={18} />
        <MoreEnd>»</MoreEnd>
      </UserPanel>
    </MenuBar>

    <ToolRow>
      <Group $w={150} $pad={5}><Run items={tools1a} end={130} /><MoreFirst>»</MoreFirst></Group>
      <Group $w={548} $pad={5} $ml={2}><Run items={tools1b} end={660} /><MoreMid>»</MoreMid></Group>
      <Group $w={666} $pad={5}>
        <Combo $w={62} $box><IconBox $w={20}><svg width="16" height="14"><rect x=".5" y=".5" width="15" height="13" fill="#e6e6e6" stroke="#bbb" /></svg></IconBox>二维<Caret $dim /></Combo>
        <Slot $w={4} />
        <Run items={tools1c} end={1330} />
        <MoreEnd>»</MoreEnd>
      </Group>
    </ToolRow>

    <Main>
      <Nav>
        <NavHead>模块导航栏<NavHeadTail><Icon n="pin" s={11} /><Icon n="x" s={10} /></NavHeadTail></NavHead>
        <NavStack><NavTopBtn>工程设置</NavTopBtn><NavTopBtn>绘图输入</NavTopBtn></NavStack>
        <NavTools><Icon n="plus" /><Icon n="minus" /></NavTools>
        <TreeBox>
          <TreeBody>
            <TreeScroll>
              {nodes.map((d, i) => {
                const idx = nodes.findIndex(x => x.n === '自定义');
                const rail = i < idx;
                return d.root ? (
                  <TreeRow key={d.n} $guide $last={i === idx}>
                    <Chevron>{d.closed ? <ChevRight /> : <ChevDown />}</Chevron>
                    <RootIcon><Icon n={d.i} /></RootIcon>
                    <TreeLabel>{d.n}</TreeLabel>
                  </TreeRow>
                ) : (
                  <TreeRow key={d.n} $child $guide $last={i === 9 || i === 22 || i === 28}>
                    {rail && <Rail />}
                    <TreeCell $sel={d.n === '自定义线'}>
                      <Icon n={d.i} />
                      <TreeLabel>{d.n}{d.k && <TreeKey>{d.k}</TreeKey>}</TreeLabel>
                    </TreeCell>
                    {d.n === '自定义线' && <ColumnMark />}
                  </TreeRow>
                );
              })}
            </TreeScroll>
            <VScroll>
              <ScrollArrow><ArrowHead d="M1 7l4-4 4 4" /></ScrollArrow>
              <VTrack><VThumb /></VTrack>
              <ScrollArrow><ArrowHead d="M1 3l4 4 4-4" /></ScrollArrow>
            </VScroll>
          </TreeBody>
          <HScroll>
            <HEnd><ArrowHead d="M7 1L3 5l4 4" /></HEnd>
            <HThumb />
            <HEnd><ArrowHead d="M3 1l4 4-4 4" /></HEnd>
          </HScroll>
        </TreeBox>
        <NavBtn>单构件输入</NavBtn>
        <NavBtn>报表预览</NavBtn>
      </Nav>

      <Work>
        <Strip2>
          <Run items={tools2a} end={432} />
          <Combo $w={63} $white>第6层<Caret /></Combo>
          <Slot $w={5} />
          <Run items={tools2b} end={1060} />
        </Strip2>
        <Lower>
          <ListCol>
            <SearchRow><SearchInput>搜索构件...</SearchInput><Icon n="lens" /></SearchRow>
            <ListTree>
              {Array.from({ length: 34 }).map((_, i) => (
                <ListRow key={i} $last={i === 33}>
                  <ListCell $sel={i === 33}><Icon n="gear" s={14} />ZDYX-</ListCell>
                </ListRow>
              ))}
            </ListTree>
          </ListCol>
          <PropCol><PropTabs><PropTab>属性编辑</PropTab></PropTabs></PropCol>
        </Lower>
      </Work>
    </Main>

    <Status>
      <StatCell $w={148} />
      <StatCell $w={78}>层高<Mono>:2.8m</Mono></StatCell>
      <StatCell $w={98}>底标高<Mono>:17.55m</Mono></StatCell>
      <StatCell $w={48}><Mono>0</Mono></StatCell>
      <StatCell>名称在当前层当前构件类型下不允许重名</StatCell>
      <StatCell $w={70}><Mono>786 FPS</Mono></StatCell>
    </Status>

    <Taskbar>
      <Start><Win /></Start>
      <SearchBox><Cortana />在这里输入你要搜索的内容<Mic><svg width="14" height="20" viewBox="0 0 14 20"><rect x="4" y="1" width="6" height="12" rx="3" fill="none" stroke="#9b9b9b" /><path d="M1 9c0 7 12 7 12 0M7 15v4M3 19h8" fill="none" stroke="#9b9b9b" /></svg></Mic></SearchBox>
      <TaskSlot $w={50}><svg width="20" height="18"><path d="M4.5 1.5h11v15h-11zM1.5 4v10M18.5 4v10" fill="none" stroke="#e8e8e8" /></svg></TaskSlot>
      <TaskSlot $w={50}><Fan /></TaskSlot>
      <TaskSlot $w={51}><IeOutline /></TaskSlot>
      <TaskSlot $w={49}><Swirl /></TaskSlot>
      <TaskSlot $w={24}><TaskSep /></TaskSlot>
      <TaskSlot $w={48}><EdgeIcon /></TaskSlot>
      <TaskSlot $w={48}><IeColor /></TaskSlot>
      <TaskSlot $w={48} $bar><FolderT /></TaskSlot>
      <TaskSlot $w={48} $bar><Notes /></TaskSlot>
      <TaskSlot $w={48} $on $bar><Glodon /></TaskSlot>
      <TaskSlot $w={48} $bar><GreenE /></TaskSlot>
      <TaskSlot $w={48} $bar><GLogo>G</GLogo></TaskSlot>
      <TaskSlot $w={48} $bar><Book /></TaskSlot>
      <TaskSlot $w={26}><TaskSep /></TaskSlot>
      <TaskSlot $w={24}><TrayText>链接</TrayText></TaskSlot>
      <TaskSlot $w={30}><Tray d="M3 11l6-6 6 6" /></TaskSlot>
      <TaskSlot $w={20}><Tray d="M3 1v3h4V1M2 4h5v9h9V5H9" /></TaskSlot>
      <TaskSlot $w={26}><Tray d="M3 14a11 11 0 0 1 12-12M6 14a7 7 0 0 1 8-8M9 14a3 3 0 0 1 4-4" /></TaskSlot>
      <TaskSlot $w={24}><Tray d="M3 6h3l4-4v12l-4-4H3zM13 5c1 2 1 4 0 6M15 3c2 3 2 7 0 10" /></TaskSlot>
      <TaskSlot $w={32}><svg width="24" height="16"><path d="M.5.5h23v15H.5zM3 4h18M3 7h18M3 10h18M6 13h12" fill="none" stroke="#e0e0e0" /></svg></TaskSlot>
      <TaskSlot $w={24}><TrayIme>英</TrayIme></TaskSlot>
      <TaskSlot $w={32}><SogouMini>S</SogouMini></TaskSlot>
      <Clock>22:01<br />2018/5/3</Clock>
      <NotifyZone><svg width="18" height="18"><path d="M1.5 1.5h15v12H11l-2 3-2-3H1.5z" fill="none" stroke="#e8e8e8" strokeWidth="1.2" /></svg></NotifyZone>
    </Taskbar>

    <Dialog>
      <DlgTitle>截面编辑</DlgTitle>
      <DlgBody>
        <DlgTabs><DlgTab>截面</DlgTab><DlgTab $on>配筋</DlgTab></DlgTabs>
        <DlgBar $w={520} $h={26} $mt={5}>
          <Slot $w={33}>纵筋</Slot><Sep $w={7} />
          <Slot $w={34}>直线</Slot><Slot $w={8}><Caret /></Slot>
          <Combo $w={75} $white>C8@150<Caret /></Combo>
          <Slot $w={5} /><Sep $w={3} />
          <Toggled $w={51}><Icon n="cursor" s={14} />选择</Toggled>
          <Slot $w={5} />
          <Slot $w={95}>手动设置参考线</Slot><Slot $w={9}><Caret /></Slot><Sep $w={6} />
          <Slot $w={76}><IconBox $w={20}><Icon n="level" /></IconBox>设置标高</Slot>
          <Slot $w={76}><IconBox $w={19}><Icon n="mark" /></IconBox>显示标注</Slot>
          <Slot $w={24} $dim>删除</Slot>
        </DlgBar>
        <DlgBar $w={162} $h={23} $mt={4}>
          <Slot $w={32}>横筋</Slot><Sep $w={3} />
          <Slot $w={52}>钢筋类型:</Slot>
          <Toggled $w={34}>水平</Toggled>
          <Slot $w={5} />
          <Slot $w={24}>垂直</Slot>
        </DlgBar>
        <CanvasFrame><Drawing /></CanvasFrame>
        <FootRow>
          <Toggled $w={51}><Icon n="ortho" />正交</Toggled>
          <Toggled $w={75}><Icon n="dyn" />动态输入</Toggled>
          <FootGroup><Icon n="perp" />垂点<Slot $w={2} /><Icon n="mid" />中点</FootGroup>
        </FootRow>
        <DlgRule />
        <DlgTail />
        <TailRow>
          <TailCell $w={98}>(X:-52X,200)</TailCell>
          <TailCell>选择钢筋进行编辑，选择标注进行修改或移动</TailCell>
        </TailRow>
      </DlgBody>
    </Dialog>

    <Ime>
      <ImeLetter>英</ImeLetter>
      <ImeIcon $ml={0} width="14" height="18" viewBox="0 0 14 18"><circle cx="3" cy="5" r="1.5" fill="#1a6fbe" /><path d="M10 6c1 3 0 5-3 7" fill="none" stroke="#1a6fbe" strokeWidth="2" /></ImeIcon>
      <ImeIcon $ml={8} width="18" height="18" viewBox="0 0 20 20"><circle cx="10" cy="10" r="8" fill="none" stroke="#1a6fbe" strokeWidth="1.8" /><circle cx="7" cy="8" r="1.2" fill="#1a6fbe" /><circle cx="13" cy="8" r="1.2" fill="#1a6fbe" /><path d="M6 12c2 3 6 3 8 0" fill="none" stroke="#1a6fbe" strokeWidth="1.4" /></ImeIcon>
      <ImeIcon $ml={5} width="16" height="20" viewBox="0 0 16 20"><rect x="5" y="1" width="6" height="11" rx="3" fill="#1a6fbe" /><path d="M2 8c0 7 12 7 12 0M8 15v4M4 19h8" fill="none" stroke="#1a6fbe" strokeWidth="1.4" /></ImeIcon>
      <ImeIcon $ml={5} width="16" height="13" viewBox="0 0 18 14"><rect width="18" height="14" rx="2" fill="#1a6fbe" /><path d="M3 4h12M3 7h12M5 10h8" stroke="#fff" strokeDasharray="2 1" /></ImeIcon>
      <ImeIcon $ml={6} width="18" height="18" viewBox="0 0 20 20"><circle cx="8" cy="5" r="3.5" fill="#a9bdd0" /><path d="M2 18c0-6 4-8 8-7v7z" fill="#a9bdd0" /><rect x="9" y="10" width="10" height="7" fill="#fff" stroke="#a9bdd0" /></ImeIcon>
      <ImeIcon $ml={4} width="16" height="16" viewBox="0 0 18 18"><path d="M5 1l4 2 4-2 5 4-3 3-1-1v10H4V7L3 8 0 5z" fill="#1a6fbe" /></ImeIcon>
      <ImeIcon $ml={5} width="16" height="16" viewBox="0 0 18 18"><path d="M16 3l-4 3-1-1 3-4c-3-1-6 1-5 5l-7 8 3 3 7-8c4 1 5-3 4-6z" fill="#1a6fbe" /></ImeIcon>
    </Ime>
    <SogouS>S</SogouS>
    <Bubble>66</Bubble>
  </Root>
);

export default App;
